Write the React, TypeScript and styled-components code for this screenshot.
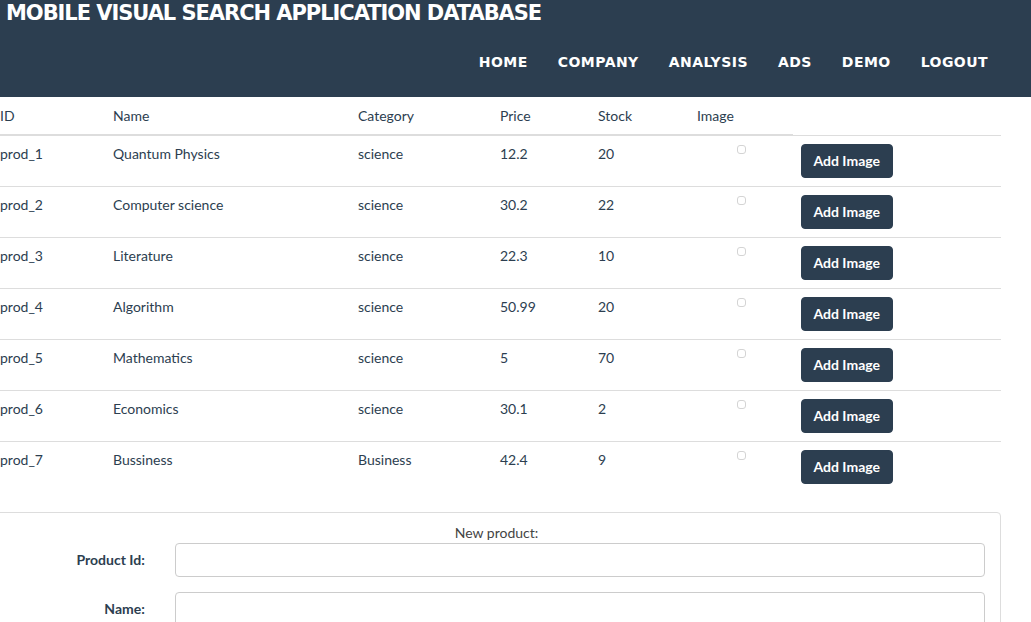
import React from "react";
import styled, { createGlobalStyle } from "styled-components";

const Global = createGlobalStyle`
  html, body { margin: 0; padding: 0; background: #fff; }
  body { font-family: Lato, "Open Sans", sans-serif; font-size: 14px; line-height: 20px; color: #2c3e50; overflow: hidden; }
  * { box-sizing: border-box; }
`;

const NavBar = styled.header`
  background: #2c3e50;
  height: 97px;
  display: flex;
  flex-direction: column;
  padding: 0 28px 0 6px;
`;

const Brand = styled.div`
  font-family: "DejaVu Sans", sans-serif;
  font-weight: 700;
  font-size: 21px;
  line-height: 26px;
  color: #fff;
  letter-spacing: -1.05px;
`;

const NavList = styled.nav`
  display: flex;
  justify-content: flex-end;
  margin-top: 26px;
`;

const NavLink = styled.a`
  font-family: "DejaVu Sans", sans-serif;
  font-weight: 700;
  font-size: 14px;
  line-height: 20px;
  letter-spacing: 0.45px;
  color: #fff;
  text-transform: uppercase;
  padding: 0 15px;
  text-decoration: none;
`;

const Main = styled.main`
  margin-left: -8px;
  width: 1009px;
`;

const Table = styled.table`
  width: 100%;
  border-collapse: collapse;
  table-layout: fixed;
`;

const Th = styled.th<{ $w?: number; $bare?: boolean }>`
  width: ${(p) => (p.$w ? `${p.$w}px` : "auto")};
  text-align: left;
  font-weight: 400;
  padding: 9px 8px 8px;
  vertical-align: bottom;
  border-bottom: ${(p) => (p.$bare ? "none" : "2px solid #ddd")};
`;

const Td = styled.td<{ $center?: boolean }>`
  padding: 8px;
  border-top: 1px solid #ddd;
  vertical-align: top;
  text-align: ${(p) => (p.$center ? "center" : "left")};
  height: 51px;
`;

const Check = styled.span`
  display: inline-block;
  width: 9px;
  height: 9px;
  border: 1px solid #d4d4d4;
  border-radius: 3px;
  margin-top: 1px;
  vertical-align: top;
`;

const Button = styled.button`
  font-family: Lato, sans-serif;
  font-weight: 700;
  font-size: 14px;
  line-height: 20px;
  color: #fff;
  background: #2c3e50;
  border: 1px solid #2c3e50;
  border-radius: 4px;
  padding: 6px 11.5px;
  height: 34px;
  cursor: pointer;
`;

const Panel = styled.section`
  margin-top: 20px;
  border: 1px solid #ddd;
  border-radius: 4px;
  padding: 10px 0 0;
`;

const Legend = styled.div`
  text-align: center;
  color: #444;
  line-height: 20px;
`;

const FormRow = styled.div`
  display: grid;
  grid-template-columns: 2fr 10fr;
  align-items: center;
  margin-bottom: 15px;
`;

const Label = styled.label`
  text-align: right;
  font-weight: 700;
  padding-right: 16px;
`;

const InputWrap = styled.div`
  padding: 0 15px 0 14px;
`;

const Input = styled.input`
  width: 100%;
  height: 34px;
  border: 1px solid #ccc;
  border-radius: 4px;
  font-family: Lato, sans-serif;
  font-size: 14px;
  padding: 6px 12px;
`;

const products = [
  ["prod_1", "Quantum Physics", "science", "12.2", "20"],
  ["prod_2", "Computer science", "science", "30.2", "22"],
  ["prod_3", "Literature", "science", "22.3", "10"],
  ["prod_4", "Algorithm", "science", "50.99", "20"],
  ["prod_5", "Mathematics", "science", "5", "70"],
  ["prod_6", "Economics", "science", "30.1", "2"],
  ["prod_7", "Bussiness", "Business", "42.4", "9"],
];

const navItems = ["Home", "Company", "Analysis", "Ads", "Demo", "Logout"];

export default function App() {
  return (
    <>
      <Global />
      <NavBar>
        <Brand>MOBILE VISUAL SEARCH APPLICATION DATABASE</Brand>
        <NavList>
          {navItems.map((n) => (
            <NavLink key={n} href="#">
              {n}
            </NavLink>
          ))}
        </NavList>
      </NavBar>
      <Main>
        <Table>
          <thead>
            <tr>
              <Th $w={113}>ID</Th>
              <Th $w={245}>Name</Th>
              <Th $w={142}>Category</Th>
              <Th $w={98}>Price</Th>
              <Th $w={99}>Stock</Th>
              <Th $w={104}>Image</Th>
              <Th $bare></Th>
            </tr>
          </thead>
          <tbody>
            {products.map((p) => (
              <tr key={p[0]}>
                <Td>{p[0]}</Td>
                <Td>{p[1]}</Td>
                <Td>{p[2]}</Td>
                <Td>{p[3]}</Td>
                <Td>{p[4]}</Td>
                <Td $center>
                  <Check />
                </Td>
                <Td>
                  <Button>Add Image</Button>
                </Td>
              </tr>
            ))}
          </tbody>
        </Table>
        <Panel>
          <Legend>New product:</Legend>
          <FormRow>
            <Label>Product Id:</Label>
            <InputWrap>
              <Input />
            </InputWrap>
          </FormRow>
          <FormRow>
            <Label>Name:</Label>
            <InputWrap>
              <Input />
            </InputWrap>
          </FormRow>
        </Panel>
      </Main>
    </>
  );
}
